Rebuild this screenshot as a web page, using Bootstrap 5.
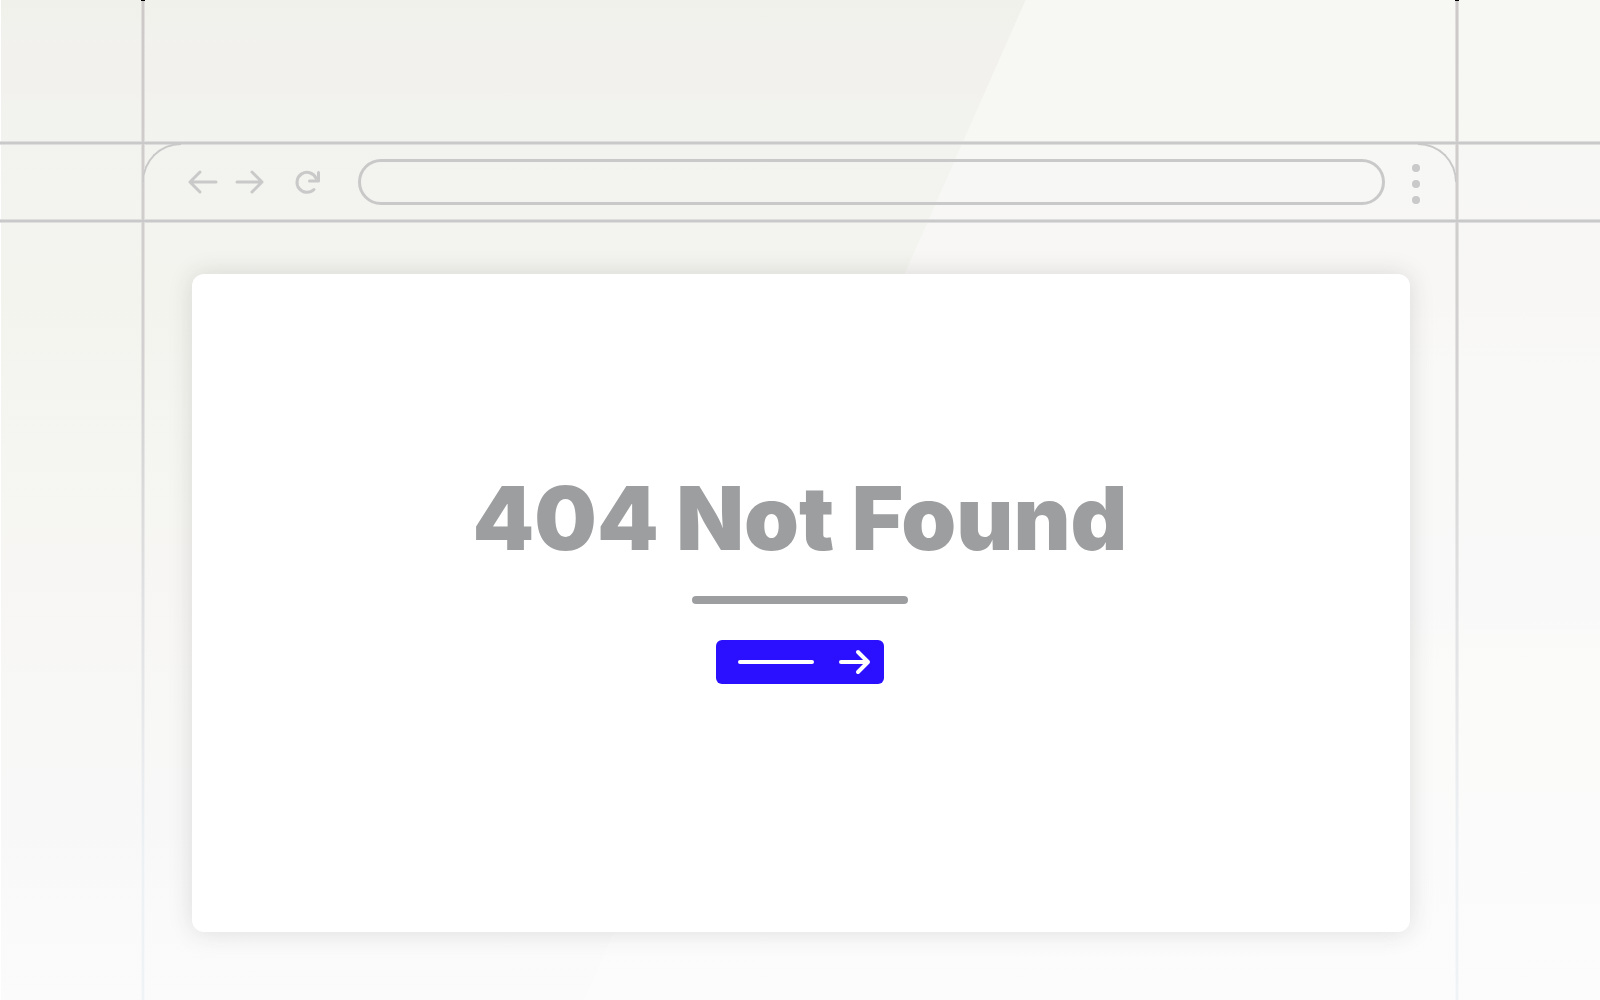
<!DOCTYPE html>
<html lang="en">
<head>
<meta charset="utf-8">
<meta name="viewport" content="width=device-width, initial-scale=1">
<title>404 Not Found</title>
<link href="https://cdn.jsdelivr.net/npm/bootstrap@5.3.0/dist/css/bootstrap.min.css" rel="stylesheet">
<style>
:root { --gutter: 141px; --line: #c9c9c9; --ink: #9d9e9f; }
.scene {
  isolation: isolate;
  background: linear-gradient(#fff, #fff) 0 0 / 1px 100% no-repeat,
    linear-gradient(#f0f1ea 0, #f1f2ed 3%, #f3f1ee 5%, #f3f1ee 9%, #f2f3ee 11%, #f3f3ef 20%, #f4f4ef 30%, #f5f6f1 45%, #f7f6f4 57%, #f8f8f6 72%, #f8f8f9 83%, #fafafa 91%, #fbfbfb 100%);
}
/* Slanted lighter pane behind everything */
.scene::before {
  content: ""; position: absolute; inset: 0; z-index: -1;
  background: linear-gradient(#f7f8f3 0, #f7f8f3 14%, #f7f7f5 15%, #f8f7f5 30%, #f9f9f7 37%, #f9f9f9 61%, #fbfbf9 67%, #fbfbfb 85%, #fcfcfc 100%);
  clip-path: polygon(64.1% 0, 100% 0, 100% 100%, 36.5% 100%);
}
/* Vertical guides, fading towards the bottom */
.scene::after {
  content: ""; position: absolute; inset: 0 var(--gutter); pointer-events: none; mix-blend-mode: darken;
  --tick: linear-gradient(#000, #000);
  --fade: linear-gradient(#cdc9c8, #d2d0d0 35%, #eef1f4 85%, #f0f3f5);
  --soft: linear-gradient(#e0dedc, #e3e2e1 35%, #f5f6f7 85%, #f7f8f9);
  background: var(--tick) 0 0 / 4px 1px no-repeat, var(--tick) right 0 top 0 / 4px 1px no-repeat,
    var(--fade) 1px 0 / 2px 100% no-repeat, var(--fade) right 1px top 0 / 2px 100% no-repeat,
    var(--soft) 0 0 / 4px 100% no-repeat, var(--soft) right 0 top 0 / 4px 100% no-repeat;
}
.chrome-bar {
  --rail: linear-gradient(#dedede 1px, #c9c9c9 1px 3px, #dedede 3px);
  margin-top: 141px; height: 82px; padding: 0 var(--gutter);
  background: var(--rail) 0 0 / 100% 4px no-repeat, var(--rail) 0 100% / 100% 4px no-repeat;
}
.tab-shape { padding: 0 39px 0 46px; }
.tab-shape::before, .tab-shape::after {
  content: ""; position: absolute; top: 2px; width: 39px; height: 39px; border-top: 2px solid var(--line); pointer-events: none;
}
.tab-shape::before { left: 1px; border-left: 2px solid var(--line); border-top-left-radius: 39px; }
.tab-shape::after { right: 2px; border-right: 2px solid var(--line); border-top-right-radius: 39px; }
.tool { color: var(--line); line-height: 0; }
.tool svg, .go svg { fill: none; stroke: currentColor; stroke-width: 3; stroke-linecap: round; stroke-linejoin: round; }
.go svg { stroke-width: 4; }
.tool .dots { fill: currentColor; stroke: none; }
.address { height: 46px; border: 3px solid var(--line); border-radius: 23px; outline: 0; padding: 0 20px; margin: 0 27px 0 38px; min-width: 0; }
.page-card {
  margin: 51px 190px 68px 192px; min-height: calc(100vh - 342px);
  border-radius: 12px; box-shadow: 0 0 24px rgba(50, 50, 50, .15); padding: 0 2px 56px 0;
}
.headline { font: 900 88px/104px Inter, "Open Sans", sans-serif; color: var(--ink); }
.rule-bar { width: 216px; height: 8px; border-radius: 4px; background: var(--ink); margin: 26px 0 36px; }
.go { width: 168px; height: 44px; border-radius: 6px; background: #2a10ff; color: #fff; padding: 0 12px 0 22px; }
.go:hover { color: #fff; background: #2a10ff; }
.go-label { width: 76px; height: 4px; border-radius: 2px; background: #fff; }
</style>
</head>
<body>
<div class="scene position-relative min-vh-100 d-flex flex-column">
  <header class="chrome-bar d-flex">
    <div class="tab-shape position-relative d-flex align-items-center flex-grow-1">
      <button class="tool btn p-0 border-0" type="button" aria-label="Back"><svg width="32" height="26" viewBox="0 0 32 26"><path d="M29 13H3M13 3 3 13l10 10"/></svg></button>
      <button class="tool btn p-0 border-0 ms-3" type="button" aria-label="Forward"><svg width="30" height="26" viewBox="0 0 30 26"><path d="M2 13h25M17 3l10 10-10 10"/></svg></button>
      <button class="tool btn p-0 border-0 ms-4" type="button" aria-label="Reload"><svg width="31" height="26" viewBox="0 0 31 26"><path d="M25 20.500A10 10 0 1 1 27 9M29.500 3.500v8.500H20.500"/></svg></button>
      <input class="address bg-transparent flex-grow-1" type="text" aria-label="Address">
      <button class="tool btn p-0 border-0" type="button" aria-label="Menu"><svg class="dots" width="8" height="44" viewBox="0 0 8 44"><circle cx="4" cy="8" r="4"/><circle cx="4" cy="24" r="4"/><circle cx="4" cy="40" r="4"/></svg></button>
    </div>
  </header>
  <main class="page-card bg-white d-flex flex-column align-items-center justify-content-center">
    <h1 class="headline m-0 text-center">404 Not Found</h1>
    <div class="rule-bar"></div>
    <a class="go btn border-0 d-flex align-items-center justify-content-between" href="#" aria-label="Go back home">
      <span class="go-label"></span>
      <svg width="34" height="28" viewBox="0 0 34 28"><path d="M3 14h27M20 4l10 10-10 10"/></svg>
    </a>
  </main>
</div>
<script src="https://cdn.jsdelivr.net/npm/bootstrap@5.3.0/dist/js/bootstrap.bundle.min.js"></script>
</body>
</html>
